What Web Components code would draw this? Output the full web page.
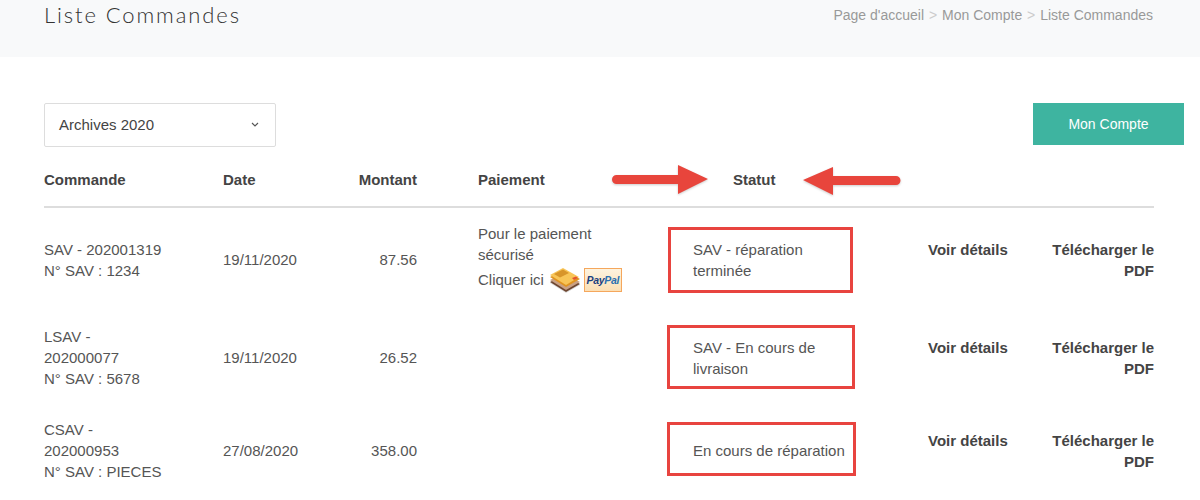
<!DOCTYPE html>
<html lang="fr">
<head>
<meta charset="utf-8">
<title>Liste Commandes</title>
<style>
  html, body { margin: 0; padding: 0; background: #fff; }
  body { font-family: "Liberation Sans", Arial, sans-serif; color: #555; overflow: hidden; height: 500px; }
</style>
</head>
<body>
<page-banner>
  <span slot="title">Liste Commandes</span>
  <span>Page d'accueil</span><span>Mon Compte</span><span>Liste Commandes</span>
</page-banner>

<order-toolbar>
  <archive-select>Archives 2020</archive-select>
  <account-button>Mon Compte</account-button>
</order-toolbar>

<order-row head>
  <span slot="order">Commande</span>
  <span slot="date">Date</span>
  <span slot="amount">Montant</span>
  <span slot="payment">Paiement</span>
  <status-heading slot="status">Statut</status-heading>
</order-row>

<order-row>
  <span slot="order">SAV - 202001319<br>N° SAV : 1234</span>
  <span slot="date">19/11/2020</span>
  <span slot="amount">87.56</span>
  <pay-cell slot="payment">Pour le paiement sécurisé</pay-cell>
  <status-box slot="status" style="--t:-12px;--b:-12px;--l:-25px;--r:0px">SAV - réparation terminée</status-box>
</order-row>

<order-row>
  <span slot="order">LSAV - 202000077<br>N° SAV : 5678</span>
  <span slot="date">19/11/2020</span>
  <span slot="amount">26.52</span>
  <status-box slot="status" style="--t:-12px;--b:-10px;--l:-26px;--r:-2px">SAV - En cours de livraison</status-box>
</order-row>

<order-row>
  <span slot="order">CSAV - 202000953<br>N° SAV : PIECES</span>
  <span slot="date">27/08/2020</span>
  <span slot="amount">358.00</span>
  <status-box slot="status" style="--t:-18px;--b:-15px;--l:-26px;--r:-3px">En cours de réparation</status-box>
</order-row>

<script>
const bannerTemplate = document.createElement('template');
bannerTemplate.innerHTML = `
  <style>
    :host { display: flex; justify-content: space-between; height: 57px; padding: 0 47px 0 44px; background: #f8f9fa; box-sizing: border-box; }
    h1 { margin: 0; font: 300 22px/29px Lato, sans-serif; letter-spacing: 1.9px; color: #333; }
    nav { display: flex; font-size: 14px; line-height: 30px; color: #999; }
    ::slotted(span:not([slot]):not(:last-child))::after { content: ">"; margin: 0 4.9px; color: #ccc; }
  </style>
  <h1><slot name="title"></slot></h1>
  <nav><slot></slot></nav>
`;
class PageBanner extends HTMLElement {
  constructor() {
    super();
    this.attachShadow({ mode: 'open' });
    this.shadowRoot.appendChild(bannerTemplate.content.cloneNode(true));
  }
}
window.customElements.define('page-banner', PageBanner);

const toolbarTemplate = document.createElement('template');
toolbarTemplate.innerHTML = `
  <style>
    :host { display: flex; justify-content: space-between; align-items: flex-start; margin-top: 46px; padding: 0 16px 0 44px; }
  </style>
  <slot></slot>
`;
class OrderToolbar extends HTMLElement {
  constructor() {
    super();
    this.attachShadow({ mode: 'open' });
    this.shadowRoot.appendChild(toolbarTemplate.content.cloneNode(true));
  }
}
window.customElements.define('order-toolbar', OrderToolbar);

const selectTemplate = document.createElement('template');
selectTemplate.innerHTML = `
  <style>
    :host { display: flex; align-items: center; justify-content: space-between; box-sizing: border-box; width: 232px; height: 44px; padding: 0 16px 2px 14px; border: 1px solid #ddd; border-radius: 2px; font-size: 15px; color: #444; background: #fff; }
    svg { display: block; }
  </style>
  <slot></slot>
  <svg width="8" height="5" viewBox="0 0 8 5"><path d="M1 1l3 3 3-3" fill="none" stroke="#555" stroke-width="1.1"/></svg>
`;
class ArchiveSelect extends HTMLElement {
  constructor() {
    super();
    this.attachShadow({ mode: 'open' });
    this.shadowRoot.appendChild(selectTemplate.content.cloneNode(true));
  }
}
window.customElements.define('archive-select', ArchiveSelect);

const buttonTemplate = document.createElement('template');
buttonTemplate.innerHTML = `
  <style>
    :host { display: flex; align-items: center; justify-content: center; width: 151px; height: 42px; background: #3eb4a0; color: #fff; font-size: 14px; }
  </style>
  <slot></slot>
`;
class AccountButton extends HTMLElement {
  constructor() {
    super();
    this.attachShadow({ mode: 'open' });
    this.shadowRoot.appendChild(buttonTemplate.content.cloneNode(true));
  }
}
window.customElements.define('account-button', AccountButton);

const rowTemplate = document.createElement('template');
rowTemplate.innerHTML = `
  <style>
    :host { display: grid; grid-template-columns: 179px 100px 94px 276px 235px 115px 111px; align-items: center; margin: 0 46px 0 44px; padding: 15px 0; font-size: 15px; line-height: 21px; }
    :host([head]) { height: 61px; box-sizing: border-box; padding: 6px 0 0; border-bottom: 2px solid #ddd; font-weight: bold; color: #444; }
    .order { max-width: 124px; }
    .amount { text-align: right; }
    .payment { padding-left: 61px; }
    .link { align-self: center; min-height: 42px; font-weight: bold; color: #444; }
    .pdf { text-align: right; }
    :host([head]) .link { display: none; }
  </style>
  <div class="order"><slot name="order"></slot></div>
  <div class="date"><slot name="date"></slot></div>
  <div class="amount"><slot name="amount"></slot></div>
  <div class="payment"><slot name="payment"></slot></div>
  <div class="status"><slot name="status"></slot></div>
  <div class="link">Voir détails</div>
  <div class="link pdf">Télécharger le PDF</div>
`;
class OrderRow extends HTMLElement {
  constructor() {
    super();
    this.attachShadow({ mode: 'open' });
    this.shadowRoot.appendChild(rowTemplate.content.cloneNode(true));
  }
}
window.customElements.define('order-row', OrderRow);

const payTemplate = document.createElement('template');
payTemplate.innerHTML = `
  <style>
    :host { display: block; }
    .note { width: 130px; }
    .line { display: flex; align-items: center; height: 29px; margin-bottom: 2px; white-space: nowrap; }
    .cards { display: block; margin-left: 5px; }
    .paypal { box-sizing: border-box; width: 38px; height: 24px; margin-left: 3px; border: 1px solid #f5a75c; background: linear-gradient(#fdf3df, #fbdfb5); display: flex; align-items: center; justify-content: center; font: italic bold 10.5px "Liberation Sans", sans-serif; letter-spacing: -0.3px; color: #1b3f7f; }
    .paypal b { color: #2a6fb0; }
  </style>
  <div class="note"><slot></slot></div>
  <div class="line"><span>Cliquer ici</span>
    <svg class="cards" width="32" height="26" viewBox="0 0 32 26">
      <path d="M1 16 L15 9 L31 18 L17 26 Z" fill="#ddd"/>
      <path d="M1 15 L15 8 L31 17 L17 25 Z" fill="#6e4630"/>
      <path d="M1 13 L15 6 L31 15 L17 23 Z" fill="#c9a183"/>
      <path d="M1 10 L15 3 L31 12 L17 20 Z" fill="#e09420"/>
      <path d="M1 8 L14 1 L30 10 L17 18 Z" fill="#f8c557"/>
      <path d="M5 7 L14 2.500 L20 6 L11 10.500 Z" fill="#d8952a"/>
      <path d="M23 11 L27 9.500 L29 11 L25 13 Z" fill="#e5532d"/>
    </svg>
    <span class="paypal"><span>Pay</span><b>Pal</b></span>
  </div>
`;
class PayCell extends HTMLElement {
  constructor() {
    super();
    this.attachShadow({ mode: 'open' });
    this.shadowRoot.appendChild(payTemplate.content.cloneNode(true));
  }
}
window.customElements.define('pay-cell', PayCell);

const statusTemplate = document.createElement('template');
statusTemplate.innerHTML = `
  <style>
    :host { display: block; position: relative; width: 160px; }
    .box { position: absolute; top: var(--t); bottom: var(--b); left: var(--l); right: var(--r); border: 3px solid #e8443f; }
  </style>
  <slot></slot>
  <div class="box"></div>
`;
class StatusBox extends HTMLElement {
  constructor() {
    super();
    this.attachShadow({ mode: 'open' });
    this.shadowRoot.appendChild(statusTemplate.content.cloneNode(true));
  }
}
window.customElements.define('status-box', StatusBox);

const headingTemplate = document.createElement('template');
headingTemplate.innerHTML = `
  <style>
    :host { display: block; position: relative; padding-left: 40px; }
    svg { position: absolute; left: -81px; top: -4px; filter: drop-shadow(0 1px 1px rgba(0,0,0,.2)); }
  </style>
  <slot></slot>
  <svg width="289" height="31" viewBox="0 0 289 31">
    <path d="M4.500 10H66V0L96 14L66 29V19H4.500a4.500 4.500 0 0 1 0-9Z" fill="#e8453c"/>
    <path d="M284 11H221V2L191 15L221 30V20H284a4.500 4.500 0 0 0 0-9Z" fill="#e8453c"/>
  </svg>
`;
class StatusHeading extends HTMLElement {
  constructor() {
    super();
    this.attachShadow({ mode: 'open' });
    this.shadowRoot.appendChild(headingTemplate.content.cloneNode(true));
  }
}
window.customElements.define('status-heading', StatusHeading);
</script>
</body>
</html>
